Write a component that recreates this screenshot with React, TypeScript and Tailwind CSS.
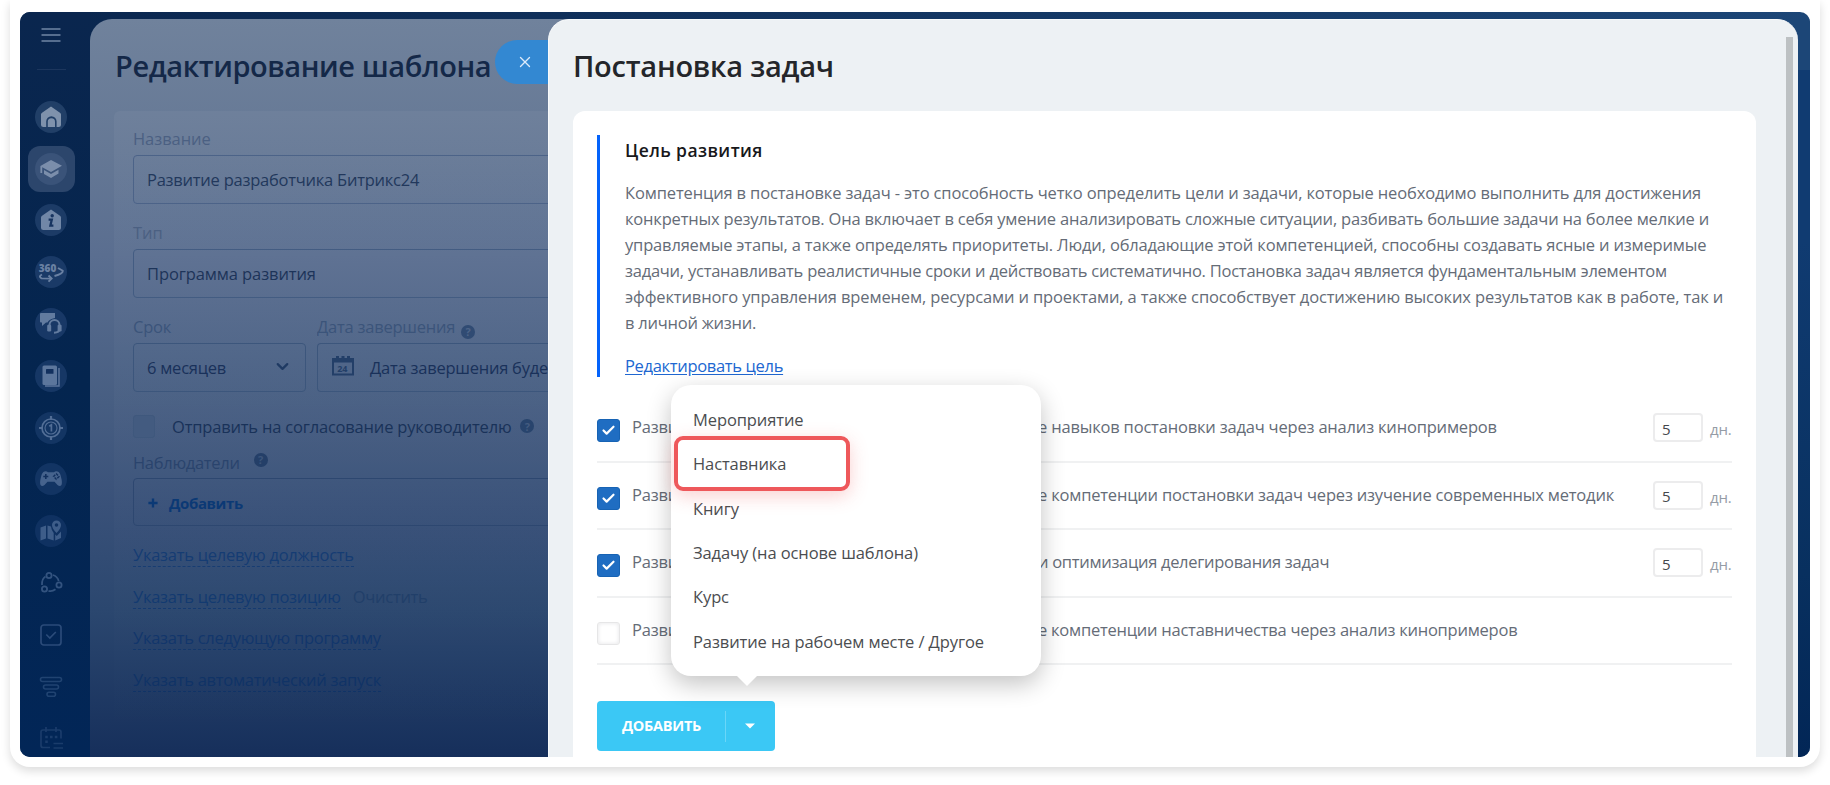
import React from 'react';
import { Check, ChevronDown, X } from 'lucide-react';

interface NavItem {
  id: string;
  color: string;
  disc?: string;
  active?: boolean;
  icon: React.ReactNode;
}

interface GoalTask {
  id: number;
  start: string;
  title: string;
  tracking: string;
  checked: boolean;
  days?: string;
}

const MenuIcon = () => (
  <svg viewBox="0 0 20 16" className="mt-[15px] h-4 w-5 shrink-0 text-[#7086a5]" stroke="currentColor" strokeWidth="1.7">
    <path d="M0.5 2 H19.5 M0.5 8 H19.5 M0.5 14 H19.5" />
  </svg>
);

const HomeIcon = () => (
  <svg viewBox="0 0 24 24" className="h-6 w-6" fill="currentColor">
    <path d="M12 1.5 L21.3 8 Q22 8.6 22 9.5 V19.5 Q22 22 19.5 22 H17.6 V16.5 A5.2 5.2 0 0 0 7.2 16.5 V22 H4.5 Q2 22 2 19.5 V9.5 Q2 8.6 2.7 8 Z" />
    <path d="M8.8 22 V16.8 A3.6 3.6 0 0 1 16 16.8 V22 Z" />
  </svg>
);

const CapIcon = () => (
  <svg viewBox="0 0 24 24" className="h-6 w-6" fill="currentColor">
    <path d="M12 3 L23 8.8 L12 15 L3.2 10.2 V16 H1.4 V9 Z" />
    <path d="M5 13 L12 16.9 L19.5 12.8 V16.6 L12 21 L5 17 Z" />
  </svg>
);

const InfoHomeIcon = () => (
  <svg viewBox="0 0 24 24" className="h-6 w-6">
    <path
      d="M12 1.5 L21.3 8 Q22 8.6 22 9.5 V19.5 Q22 22 19.5 22 H4.5 Q2 22 2 19.5 V9.5 Q2 8.6 2.7 8 Z"
      fill="currentColor"
    />
    <circle cx="13.2" cy="7.8" r="1.7" fill="#173460" />
    <path d="M9.6 11.6 H12.8 L11.4 17.6 H14.4" fill="none" stroke="#173460" strokeWidth="2.3" />
  </svg>
);

const RotateIcon = () => (
  <svg viewBox="0 0 26 24" className="h-6 w-[26px]" fill="none" stroke="currentColor" strokeWidth="1.9">
    <text
      x="0.8"
      y="11.5"
      fontSize="10"
      fontWeight="800"
      fill="currentColor"
      stroke="none"
      fontFamily="Open Sans, sans-serif"
      textLength="17.5"
    >
      360
    </text>
    <path d="M20 8 L24.8 10.8 Q25 13.5 16.5 16" strokeLinejoin="round" />
    <path d="M4 14.5 Q0 16.5 3.5 18.4 L12.5 18.6" />
    <path d="M10.5 15.5 L13.6 18.6 L10.5 21.6" />
  </svg>
);

const SupportIcon = () => (
  <svg viewBox="0 0 24 24" className="h-6 w-6">
    <path d="M2 1 H16 V6 Q10 7 8.5 10.5 H7 L3 14 V10.5 H2 Q1 10.5 1 9.5 V2 Q1 1 2 1 Z" fill="currentColor" />
    <path d="M10.5 15 V13 A5 5 0 0 1 20.5 13 V17 Q20.5 20.5 15 20.8" fill="none" stroke="currentColor" strokeWidth="2" />
    <rect x="8.2" y="12.8" width="4" height="6.6" rx="1.2" fill="currentColor" />
    <rect x="18.6" y="12.8" width="4" height="6.6" rx="1.2" fill="currentColor" />
  </svg>
);

const BookIcon = () => (
  <svg viewBox="0 0 24 24" className="h-6 w-6">
    <rect x="3.5" y="1.5" width="14.5" height="19.5" rx="1.5" fill="currentColor" />
    <path d="M20 4 V22 H6" fill="none" stroke="currentColor" strokeWidth="1.5" />
    <rect x="7" y="5" width="7.5" height="4.8" rx="0.6" fill="#12305e" />
  </svg>
);

const TargetIcon = () => (
  <svg viewBox="0 0 24 24" className="h-6 w-6" fill="none" stroke="currentColor">
    <circle cx="12" cy="12" r="9" strokeWidth="1.7" />
    <circle cx="12" cy="12" r="6" strokeWidth="1.1" />
    <path d="M12 0 V4 M12 20 V24 M0 12 H4 M20 12 H24" strokeWidth="2.2" />
    <path d="M10.3 10.2 L12.4 8.8 V15.6" strokeWidth="1.7" />
  </svg>
);

const GamepadIcon = () => (
  <svg viewBox="0 0 24 24" className="h-6 w-6">
    <path
      d="M5.5 4.5 Q7.5 4 9 5.2 H15 Q16.5 4 18.5 4.5 Q21 5 22 10 Q23.5 15.5 22.5 18 Q21 20.2 18.5 18 L15.5 14.8 H8.5 L5.5 18 Q3 20.2 1.5 18 Q0.5 15.5 2 10 Q3 5 5.5 4.5 Z"
      fill="currentColor"
    />
    <path d="M6.8 7 V12 M4.3 9.5 H9.3" stroke="#12305e" strokeWidth="1.6" />
    <path d="M17.3 6.8 L20 9.5 L17.3 12.2 L14.6 9.5 Z" fill="none" stroke="#12305e" strokeWidth="1.5" strokeDasharray="2.4 1.4" />
  </svg>
);

const MapIcon = () => (
  <svg viewBox="0 0 24 24" className="h-6 w-6" fill="currentColor">
    <path d="M1.5 8.5 L7 6.5 V19.5 L1.5 21.5 Z M8.5 6.5 L12 7.6 Q12.3 11 14.7 14 V21.5 L8.5 19.5 Z M16.2 15.5 L17.8 17 L22 12.5 V19 L16.2 21.5 Z" />
    <path
      fillRule="evenodd"
      d="M17.5 1.5 A4.5 4.5 0 0 1 22 6 Q22 9.5 17.5 14 Q13 9.5 13 6 A4.5 4.5 0 0 1 17.5 1.5 Z M17.5 4.2 A1.8 1.8 0 1 0 17.5 7.8 A1.8 1.8 0 1 0 17.5 4.2 Z"
    />
  </svg>
);

const CycleIcon = () => (
  <svg viewBox="0 0 24 24" className="h-6 w-6" fill="none" stroke="currentColor" strokeWidth="1.8">
    <circle cx="10" cy="4.5" r="2.6" />
    <circle cx="20" cy="14" r="2.6" />
    <circle cx="5.5" cy="18" r="2.6" />
    <path d="M6.5 5.5 Q2.5 8 3 14 M14 4 Q18.5 5.5 19.7 10 M9.5 19.8 Q13 20.8 16.5 18.3" />
  </svg>
);

const TaskIcon = () => (
  <svg viewBox="0 0 24 24" className="h-6 w-6" fill="none" stroke="currentColor" strokeWidth="1.7">
    <rect x="2" y="2" width="20" height="20" rx="2.8" />
    <path d="M7.3 11.5 L10.8 15 L16.8 9" />
  </svg>
);

const FunnelIcon = () => (
  <svg viewBox="0 0 24 24" className="h-6 w-6" fill="none" stroke="currentColor" strokeWidth="1.6">
    <rect x="1.5" y="2.5" width="21" height="4" rx="2" />
    <rect x="4.5" y="10" width="15" height="4" rx="2" />
    <rect x="8" y="17.3" width="8.5" height="4" rx="2" />
  </svg>
);

const PlanIcon = () => (
  <svg viewBox="0 0 24 24" className="h-6 w-6" fill="none" stroke="currentColor" strokeWidth="1.7">
    <path d="M11 21.5 H4 Q2 21.5 2 19.5 V6 Q2 4 4 4 H20 Q22 4 22 6 V12.5 M7 1 V6 M17 1 V6" />
    <path d="M6.2 11 H8.8 M11 11 H13.6 M15.8 11 H18.4 M6.2 15.8 H8.8" strokeWidth="2.4" />
    <path d="M14.5 17.5 H24 M14.5 22 H24" />
  </svg>
);

const NAV_ITEMS: NavItem[] = [
  { id: 'home', color: 'text-[#7f92ac]', disc: 'bg-[#213f67]', icon: <HomeIcon /> },
  { id: 'learning', color: 'text-[#7b8eab]', disc: 'bg-[#3a5379]', active: true, icon: <CapIcon /> },
  { id: 'info', color: 'text-[#7187a7]', disc: 'bg-[#1c3b66]', icon: <InfoHomeIcon /> },
  { id: 'rotate', color: 'text-[#6a81a3]', disc: 'bg-[#1a3a67]', icon: <RotateIcon /> },
  { id: 'support', color: 'text-[#627b9f]', disc: 'bg-[#183866]', icon: <SupportIcon /> },
  { id: 'book', color: 'text-[#5c769c]', disc: 'bg-[#163765]', icon: <BookIcon /> },
  { id: 'target', color: 'text-[#526e96]', disc: 'bg-[#133563]', icon: <TargetIcon /> },
  { id: 'games', color: 'text-[#46638d]', disc: 'bg-[#123463]', icon: <GamepadIcon /> },
  { id: 'map', color: 'text-[#3e5d89]', disc: 'bg-[#0f3161]', icon: <MapIcon /> },
  { id: 'cycle', color: 'text-[#33537f]', icon: <CycleIcon /> },
  { id: 'tasks', color: 'text-[#2b4b79]', icon: <TaskIcon /> },
  { id: 'funnel', color: 'text-[#204371]', icon: <FunnelIcon /> },
  { id: 'plan', color: 'text-[#1a3c6b]', icon: <PlanIcon /> }
];

const TASKS: GoalTask[] = [
  { id: 1, start: 'Разви', title: 'е навыков постановки задач через анализ кинопримеров', tracking: 'tracking-[-0.19px]', checked: true, days: '5' },
  { id: 2, start: 'Разви', title: 'е компетенции постановки задач через изучение современных методик', tracking: 'tracking-[-0.19px]', checked: true, days: '5' },
  { id: 3, start: 'Разви', title: 'и оптимизация делегирования задач', tracking: 'tracking-[-0.3px]', checked: true, days: '5' },
  { id: 4, start: 'Разви', title: 'е компетенции наставничества через анализ кинопримеров', tracking: 'tracking-[-0.24px]', checked: false }
];

const MENU_ITEMS = ['Мероприятие', 'Наставника', 'Книгу', 'Задачу (на основе шаблона)', 'Курс', 'Развитие на рабочем месте / Другое'];

const GOAL_LINES = [
  {
    tracking: 'tracking-[-0.14px]',
    text: 'Компетенция в постановке задач - это способность четко определить цели и задачи, которые необходимо выполнить для достижения'
  },
  {
    tracking: 'tracking-[-0.19px]',
    text: 'конкретных результатов. Она включает в себя умение анализировать сложные ситуации, разбивать большие задачи на более мелкие и'
  },
  {
    tracking: 'tracking-[-0.17px]',
    text: 'управляемые этапы, а также определять приоритеты. Люди, обладающие этой компетенцией, способны создавать ясные и измеримые'
  },
  {
    tracking: 'tracking-[-0.24px]',
    text: 'задачи, устанавливать реалистичные сроки и действовать систематично. Постановка задач является фундаментальным элементом'
  },
  {
    tracking: 'tracking-[-0.135px]',
    text: 'эффективного управления временем, ресурсами и проектами, а также способствует достижению высоких результатов как в работе, так и'
  },
  { tracking: 'tracking-[-0.24px]', text: 'в личной жизни.' }
];

const Sidebar = () => (
  <nav className="-mt-[7px] flex h-[745px] w-[70px] shrink-0 flex-col items-center overflow-hidden bg-linear-to-b from-[#0a264e] via-[#04254f] to-[#022657] pr-[8px]">
    <MenuIcon />
    <div className="mt-[26px] h-px w-[29px] shrink-0 bg-[#1c365d]" />
    <div className="mt-[21px] flex flex-col">
      {NAV_ITEMS.map(item => (
        <div key={item.id} className="flex h-[51.8px] w-[47px] shrink-0 items-center justify-center">
          <div className={`flex h-[46px] w-[47px] items-center justify-center rounded-xl ${item.active ? 'bg-[#2c466c]' : ''}`}>
            <div className={`flex h-8 w-8 items-center justify-center rounded-full ${item.disc || ''} ${item.color}`}>
              {item.icon}
            </div>
          </div>
        </div>
      ))}
    </div>
  </nav>
);

const HelpDot: React.FC<{ className: string }> = ({ className }) => (
  <span className={`flex h-[14px] w-[14px] shrink-0 items-center justify-center rounded-full text-[11px] font-bold leading-none ${className}`}>
    ?
  </span>
);

const TemplateForm = () => (
  <section className="flex w-[482px] shrink-0 flex-col overflow-hidden rounded-tl-[22px] bg-[linear-gradient(to_bottom,#70829c_0%,#657895_18%,#5a6e90_32%,#475e82_52%,#395179_66%,#2b476f_80%,#162f5b_100%)] pl-6">
    <h1 className="mt-[26px] h-[42px] whitespace-nowrap pl-px text-[29px] font-[550] leading-[42px] tracking-[-0.42px] text-[#142848]">
      Редактирование шаблона
    </h1>
    <div className="mt-6 flex flex-1 flex-col rounded-tl-md bg-linear-to-b from-white/4 to-transparent pl-[19px] pr-6 pt-[16px] text-[16.5px] leading-6 tracking-[-0.24px] text-[#1d3459]">
      <label className="tracking-[-0.05px] text-[#4b6082]">Название</label>
      <div className="-mr-6 mt-1 flex h-[49px] items-center rounded-l-[4px] border border-[#4c6388] pl-[13px]">
        <span className="whitespace-nowrap text-[#22385c]">Развитие разработчика Битрикс24</span>
      </div>
      <label className="mt-[17px] tracking-normal text-[#4b6082]">Тип</label>
      <div className="-mr-6 mt-1 flex h-[49px] items-center rounded-l-[4px] border border-[#435c82] pl-[13px]">
        <span className="tracking-[-0.1px]">Программа развития</span>
      </div>
      <div className="mt-[17px] flex gap-[11px]">
        <div className="w-[173px] shrink-0">
          <label className="block text-[#3b547a]">Срок</label>
          <div className="mt-1 flex h-[49px] items-center justify-between rounded-[4px] border border-[#3c567c] pl-[13px] pr-[13px] pt-px text-[#19315a]">
            <span>6 месяцев</span>
            <ChevronDown className="-mt-1 h-[19px] w-[19px] text-[#1f3a63]" strokeWidth={2.8} />
          </div>
        </div>
        <div className="w-[231px] shrink-0 overflow-hidden">
          <div className="flex h-6 items-center gap-[6px]">
            <label className="tracking-[-0.24px] text-[#3b547a]">Дата завершения</label>
            <HelpDot className="mt-[9px] bg-[#304b73] text-[#4d6488]" />
          </div>
          <div className="mt-1 flex h-[49px] items-center rounded-l-[4px] border border-r-0 border-[#3c567c] pl-[14px] pt-px text-[#19315a]">
            <svg viewBox="0 0 22 20" className="-mt-1 h-5 w-[22px] shrink-0 text-[#233f68]">
              <path d="M1 3 H21 V18.5 H1 Z" fill="none" stroke="currentColor" strokeWidth="2" />
              <path d="M1 3 H21 V6.5 H1 Z M4 0 H7 V3 H4 Z M9.5 0 H12.5 V3 H9.5 Z M15 0 H18 V3 H15 Z" fill="currentColor" />
              <text x="5.3" y="15.5" fontSize="9" fontWeight="700" fill="currentColor">24</text>
            </svg>
            <span className="ml-[16px] whitespace-nowrap">Дата завершения буде</span>
          </div>
        </div>
      </div>
      <div className="mt-[22px] flex h-6 items-center text-[#193259]">
        <span className="h-[23px] w-[22px] shrink-0 rounded-[3px] border border-[#3f587d] bg-[#435b80]" />
        <span className="ml-[17px] whitespace-nowrap pt-px tracking-[-0.19px]">Отправить на согласование руководителю</span>
        <HelpDot className="ml-[9px] bg-[#28446d] text-[#435b80]" />
      </div>
      <div className="mt-[13px] flex h-6 items-center text-[#2a446d]">
        <span className="tracking-[-0.3px]">Наблюдатели</span>
        <HelpDot className="-mt-[7px] ml-[14px] bg-[#243f68] text-[#3c557b]" />
      </div>
      <div className="-mr-6 mt-[3px] flex h-[48px] shrink-0 items-center rounded-l-[4px] border border-[#2d4770] pl-[14px] pt-[2px] font-bold text-[#0b3975]">
        <svg viewBox="0 0 12 12" className="h-[10px] w-[10px]" stroke="currentColor" strokeWidth="2.8">
          <path d="M6 0.5 V11.5 M0.5 6 H11.5" />
        </svg>
        <span className="ml-[11px] text-[15px] tracking-[-0.4px]">Добавить</span>
      </div>
      <div className="mt-[17px] flex flex-col items-start gap-[17.5px] whitespace-nowrap tracking-[-0.27px]">
        <a className="h-6 border-b border-dashed border-[#173d73] text-[#153c73]">Указать целевую должность</a>
        <div className="flex gap-3">
          <a className="h-6 border-b border-dashed border-[#153a70] text-[#133a70]">Указать целевую позицию</a>
          <span className="text-[#213f69]">Очистить</span>
        </div>
        <a className="h-6 border-b border-dashed border-[#13376b] text-[#12366b]">Указать следующую программу</a>
        <a className="h-6 border-b border-dashed border-[#103366] text-[#103366]">Указать автоматический запуск</a>
      </div>
    </div>
  </section>
);

const TaskRow: React.FC<{ task: GoalTask }> = ({ task }) => (
  <li className="flex h-[67.5px] items-start border-b-2 border-[#f0f1f2] pt-[18px]">
    <span
      className={`mt-[6px] flex h-[23px] w-[23px] shrink-0 items-center justify-center rounded-[3px] border ${
        task.checked ? 'border-[#1763b4] bg-[#1f6dc2]' : 'border-[#e6e6e7] bg-white shadow-[inset_0_0_4px_#e4e4e6]'
      }`}
    >
      {task.checked && <Check className="h-[15px] w-[15px] text-white" strokeWidth={3.5} />}
    </span>
    <span className="ml-3 w-[406px] shrink-0 pt-[2px] leading-[24px] tracking-[-0.2px]">{task.start}</span>
    <span className={`whitespace-nowrap pt-[2px] leading-[24px] ${task.tracking}`}>{task.title}</span>
    {task.days && (
      <div className="ml-auto flex items-center">
        <span className="flex h-[29px] w-[50px] items-center rounded-[4px] border-2 border-[#ececed] pl-[7px] pt-[3px] text-[15px] text-[#44474c]">
          {task.days}
        </span>
        <span className="ml-[7px] w-[22px] pt-[4px] text-[15px] tracking-[-0.2px] text-[#959ca6]">дн.</span>
      </div>
    )}
  </li>
);

const AddMenu = () => (
  <div className="absolute left-[98px] top-[274px] h-[291px] w-[370px] rounded-[20px] bg-white pl-[22px] pt-[13px] text-[16.5px] tracking-[-0.1px] text-[#4b4d50] shadow-[0_8px_24px_rgba(0,0,0,0.24)]">
    {MENU_ITEMS.map(item => (
      <div key={item} className="flex h-[44.4px] items-center whitespace-nowrap">
        {item}
      </div>
    ))}
    <div className="absolute left-[3px] top-[51px] h-[55px] w-[176px] rounded-[9px] border-4 border-[#ee585b] shadow-[0_5px_18px_rgba(238,88,91,0.28)]" />
    <svg viewBox="0 0 22 11" className="absolute left-[65px] top-[290px] h-[11px] w-[22px] text-white" fill="currentColor">
      <path d="M0 0 H22 L11 11 Z" />
    </svg>
  </div>
);

const GoalPanel = () => (
  <section className="relative z-10 -ml-6 flex w-[1250px] shrink-0 flex-col rounded-t-[21px] border-t border-l border-[#f8fafb] bg-[#edf1f4] pl-[24px]">
    <button className="absolute -left-[54px] top-[20px] flex h-[44px] w-[53px] items-center rounded-l-full bg-[#3388d2] pl-[21px] text-[#dceafa]">
      <X className="h-[18px] w-[18px]" strokeWidth={1.8} />
    </button>
    <div className="absolute right-[5px] top-[17px] h-[721px] w-[7px] bg-[#bdc1c3]" />
    <h2 className="mt-[25px] h-[42px] text-[29px] font-[550] leading-[42px] tracking-[-0.25px] text-[#24262a]">Постановка задач</h2>
    <div className="relative mt-6 h-[646px] w-[1183px] rounded-t-[12px] bg-white px-6 pt-[24px] text-[16.5px] text-[#656c77]">
      <div className="h-[242px] border-l-[3px] border-[#0463fb] pl-[25px] pt-[3px]">
        <h3 className="text-[17.5px] font-[550] leading-6 tracking-[0.4px] text-[#17181b]">Цель развития</h3>
        <div className="mt-[18px]">
          {GOAL_LINES.map(line => (
            <p key={line.text} className={`h-[26px] whitespace-nowrap leading-[26px] ${line.tracking}`}>
              {line.text}
            </p>
          ))}
        </div>
        <a className="mt-[18px] block w-fit leading-6 tracking-[-0.32px] text-[#2067d1] underline underline-offset-2">Редактировать цель</a>
      </div>
      <ul className="mt-[18px]">
        {TASKS.map(task => (
          <TaskRow key={task.id} task={task} />
        ))}
      </ul>
      <button className="mt-[36px] flex h-[50px] w-[178px] items-center rounded-[4px] bg-[#3bc8f5] text-white">
        <span className="flex h-[31px] w-[129px] items-center justify-center border-r border-[#6ad6f8] pl-px text-[14.5px] font-bold tracking-[-0.25px]">
          ДОБАВИТЬ
        </span>
        <span className="flex flex-1 justify-center pr-px">
          <svg viewBox="0 0 10 6" className="h-[6px] w-[10px]" fill="currentColor">
            <path d="M0 0.5 H10 L5 5.5 Z" />
          </svg>
        </span>
      </button>
      <AddMenu />
    </div>
  </section>
);

export default function App() {
  return (
    <div className="h-[785px] w-[1830px] overflow-hidden bg-white px-[10px] font-['Open_Sans',sans-serif]">
      <div className="h-[767px] rounded-b-[20px] bg-white px-[10px] pt-3 shadow-[0_4px_10px_rgba(0,0,0,0.14)]">
        <div className="flex h-[745px] overflow-hidden rounded-[10px] bg-linear-to-r from-[#0a264e] to-[#1c4677] pt-[7px]">
          <Sidebar />
          <TemplateForm />
          <GoalPanel />
          <div className="-ml-6 h-[738px] w-[36px] shrink-0 bg-[linear-gradient(to_bottom,#1c4677_0px,#1c4677_51px,#103b71_51px,#103b71_30%,#08305f_75%,#022656_100%)]" />
        </div>
      </div>
    </div>
  );
}
